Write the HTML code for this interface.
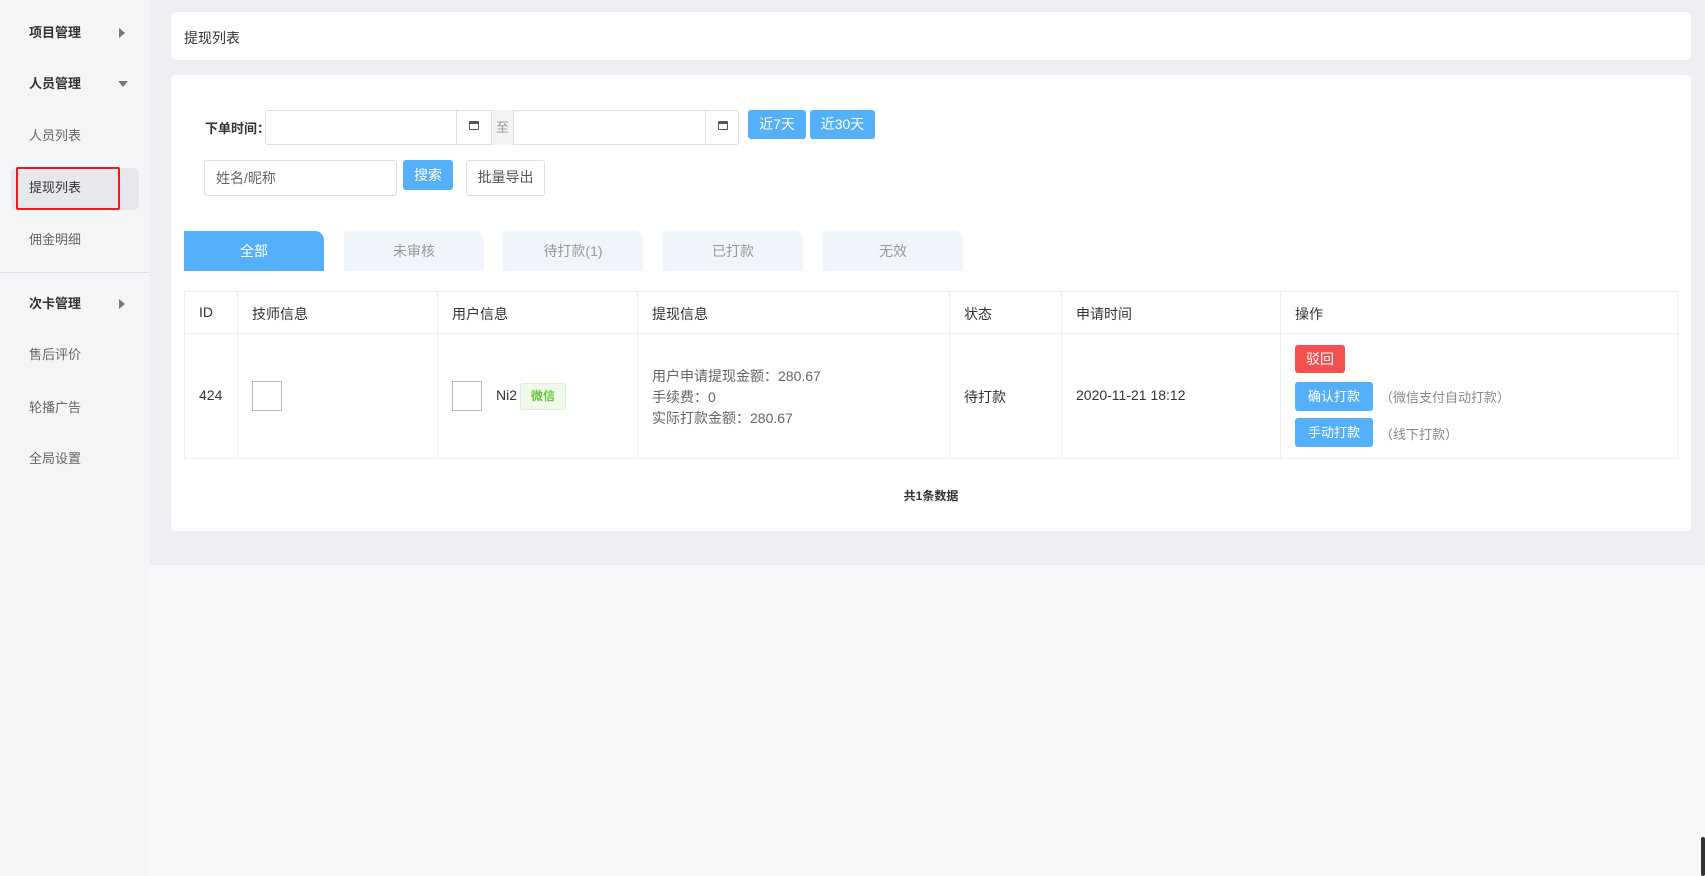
<!DOCTYPE html>
<html><head><meta charset="utf-8"><style>
*{box-sizing:border-box;margin:0;padding:0}
body{width:1705px;height:876px;background:#f6f7f9;font-family:"Liberation Sans","Noto Sans CJK SC",sans-serif;position:relative;overflow:hidden;color:#333}
.a{position:absolute}
.side{left:0;top:0;width:150px;height:876px;background:#f4f5f7}
.si{position:absolute;left:29px;font-size:13px;line-height:16px;color:#666}
.si.b{font-weight:bold;color:#333}
.main{left:150px;top:0;width:1555px;height:565px;background:#eeeff3}
.card{background:#fff;border-radius:5px}
.inp{border:1px solid #dcdfe6;border-radius:3px;background:#fff}
.btn{color:#fff;background:#55b0fc;border-radius:3px;font-size:14px;text-align:center}
.tab{top:231px;height:40px;width:140px;background:#f0f5fc;border-radius:0 9px 0 0;text-align:center;line-height:40px;font-size:14px;color:#999}
.th{font-size:14px;color:#333;top:304px}
.vl{top:291px;width:1px;height:168px;background:#ebeef2}
.td{font-size:14px;color:#333}
.img{width:30px;height:30px;border:1px solid #bbb;background:#fff}
</style></head><body>
<div class="a side">
<div class="si b" style="top:25px">项目管理</div><div class="a" style="left:119px;top:28px;border-left:6px solid #777;border-top:5px solid transparent;border-bottom:5px solid transparent"></div>
<div class="si b" style="top:76px">人员管理</div><div class="a" style="left:118px;top:81px;border-top:6px solid #777;border-left:5px solid transparent;border-right:5px solid transparent"></div>
<div class="si" style="top:128px">人员列表</div>
<div class="a" style="left:11px;top:168px;width:128px;height:42px;background:#e7e8ed;border-radius:6px"></div>
<div class="a" style="left:16px;top:167px;width:104px;height:43px;border:2px solid #f01818;border-radius:2px"></div>
<div class="si" style="top:180px;color:#333">提现列表</div>
<div class="si" style="top:232px">佣金明细</div>
<div class="a" style="left:0;top:272px;width:149px;height:1px;background:#dcdde2"></div>
<div class="si b" style="top:296px">次卡管理</div><div class="a" style="left:119px;top:299px;border-left:6px solid #777;border-top:5px solid transparent;border-bottom:5px solid transparent"></div>
<div class="si" style="top:347px">售后评价</div>
<div class="si" style="top:400px">轮播广告</div>
<div class="si" style="top:451px">全局设置</div>
</div>
<div class="a main"></div>
<div class="a card" style="left:171px;top:12px;width:1520px;height:48px"><div class="a" style="left:13px;top:16px;font-size:14px">提现列表</div></div>
<div class="a card" style="left:171px;top:75px;width:1520px;height:456px"></div>
<div class="a" style="left:205px;top:118px;font-size:13px;font-weight:bold">下单时间：</div>
<div class="a inp" style="left:265px;top:110px;width:474px;height:35px"></div>
<div class="a" style="left:456px;top:110px;width:1px;height:35px;background:#dcdfe6"></div>
<div class="a" style="left:491px;top:110px;width:23px;height:35px;background:#f3f3f3;border-left:1px solid #dcdfe6;border-right:1px solid #dcdfe6;color:#999;font-size:13px;line-height:35px;text-align:center">至</div>
<div class="a" style="left:705px;top:110px;width:1px;height:35px;background:#dcdfe6"></div>
<div class="a" style="left:469px;top:121px;width:10px;height:9px;border:1.5px solid #555;border-top-width:3px;border-radius:1px"></div>
<div class="a" style="left:718px;top:121px;width:10px;height:9px;border:1.5px solid #555;border-top-width:3px;border-radius:1px"></div>
<div class="a btn" style="left:748px;top:110px;width:58px;height:29px;line-height:29px">近7天</div>
<div class="a btn" style="left:810px;top:110px;width:65px;height:29px;line-height:29px">近30天</div>
<div class="a inp" style="left:204px;top:160px;width:193px;height:36px;color:#666;font-size:14px;line-height:34px;padding-left:11px">姓名/昵称</div>
<div class="a btn" style="left:403px;top:160px;width:50px;height:30px;line-height:30px">搜索</div>
<div class="a inp" style="left:466px;top:160px;width:79px;height:36px;font-size:14px;line-height:32px;text-align:center;color:#555">批量导出</div>
<div class="a tab" style="left:184px;background:#55b0fc;color:#fff">全部</div>
<div class="a tab" style="left:344px">未审核</div>
<div class="a tab" style="left:503px">待打款(1)</div>
<div class="a tab" style="left:663px">已打款</div>
<div class="a tab" style="left:823px">无效</div>
<div class="a" style="left:184px;top:291px;width:1494px;height:168px;border:1px solid #ebeef2"></div>
<div class="a" style="left:184px;top:333px;width:1494px;height:1px;background:#ebeef2"></div>
<div class="a vl" style="left:237px"></div><div class="a vl" style="left:437px"></div><div class="a vl" style="left:637px"></div><div class="a vl" style="left:949px"></div><div class="a vl" style="left:1061px"></div><div class="a vl" style="left:1280px"></div>
<div class="a th" style="left:199px">ID</div><div class="a th" style="left:252px">技师信息</div><div class="a th" style="left:452px">用户信息</div><div class="a th" style="left:652px">提现信息</div><div class="a th" style="left:964px">状态</div><div class="a th" style="left:1076px">申请时间</div><div class="a th" style="left:1295px">操作</div>
<div class="a td" style="left:199px;top:387px">424</div>
<div class="a img" style="left:252px;top:381px"></div>
<div class="a img" style="left:452px;top:381px"></div>
<div class="a td" style="left:496px;top:387px">Ni2</div>
<div class="a" style="left:520px;top:383px;width:46px;height:27px;border:1px solid #d9f0cf;background:#f0f9eb;color:#67c23a;font-size:12px;font-weight:bold;text-align:center;line-height:25px;border-radius:3px">微信</div>
<div class="a td" style="left:652px;top:366px;color:#666;line-height:21px">用户申请提现金额：280.67<br>手续费：0<br>实际打款金额：280.67</div>
<div class="a td" style="left:964px;top:387px">待打款</div>
<div class="a td" style="left:1076px;top:387px">2020-11-21 18:12</div>
<div class="a btn" style="left:1295px;top:345px;width:50px;height:28px;line-height:28px;background:#f55050">驳回</div>
<div class="a btn" style="left:1295px;top:382px;width:78px;height:29px;line-height:29px;font-size:13px">确认打款</div>
<div class="a td" style="left:1380px;top:387px;color:#888;font-size:13px">（微信支付自动打款）</div>
<div class="a btn" style="left:1295px;top:418px;width:78px;height:29px;line-height:29px;font-size:13px">手动打款</div>
<div class="a td" style="left:1380px;top:424px;color:#888;font-size:13px">（线下打款）</div>
<div class="a" style="left:0;width:1862px;top:487px;text-align:center;font-size:12px;font-weight:bold;color:#333">共1条数据</div>
<div class="a" style="left:1701px;top:837px;width:4px;height:39px;background:#333;border-radius:2px"></div>
</body></html>
